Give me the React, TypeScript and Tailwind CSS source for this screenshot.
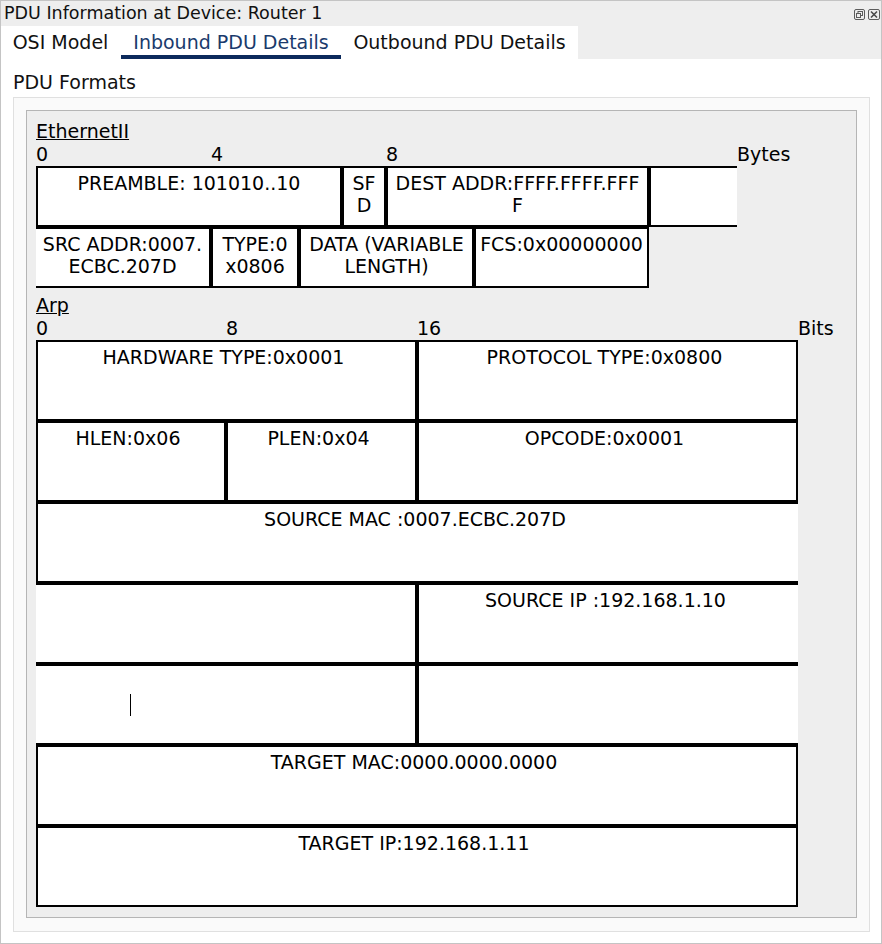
import React from "react";

const base =
  "bg-white border-black text-center pt-[4px] leading-[22px] whitespace-nowrap text-[19px] shrink-0";
const arp = base + " pr-[6px]";

function RestoreIcon() {
  return (
    <svg width="11" height="11" viewBox="0 0 11 11" fill="none">
      <rect x="0.5" y="0.5" width="10" height="10" rx="1.5" stroke="#5c5c5c" />
      <rect x="4" y="2.5" width="4.5" height="4" stroke="#5c5c5c" />
      <rect x="2.5" y="4.5" width="4" height="4" fill="#eeeeee" stroke="#5c5c5c" />
    </svg>
  );
}

function CloseIcon() {
  return (
    <svg width="12" height="11" viewBox="0 0 12 11" fill="none">
      <rect x="0.5" y="0.5" width="11" height="10" rx="1.5" stroke="#5c5c5c" />
      <path d="M3 2.5 L9 8.5 M9 2.5 L3 8.5" stroke="#4a4a4a" strokeWidth="1.6" />
    </svg>
  );
}

export default function App() {
  return (
    <div className="relative w-[882px] h-[944px] border border-[#c4c4c4] bg-white font-['DejaVu_Sans',sans-serif] text-black overflow-hidden">
      {/* Title bar */}
      <div className="h-[25px] bg-[#eeeeee] flex items-center justify-between pl-[3px] pr-[1px]">
        <span className="text-[17.5px] leading-[25px] text-[#111111]">
          PDU Information at Device: Router 1
        </span>
        <div className="flex items-center gap-[3px] self-start mt-[8px]">
          <RestoreIcon />
          <CloseIcon />
        </div>
      </div>

      {/* Tabs */}
      <div className="h-[33px] bg-[#eeeeee] flex">
        <div className="w-[120px] bg-white flex items-center justify-center pl-[1px] pr-[2px] text-[19px] text-[#111111]">
          OSI Model
        </div>
        <div className="w-[220px] bg-white flex items-center justify-center text-[19px] text-[#1a3a6c] shadow-[inset_0_-4px_0_#0c2a5c]">
          Inbound PDU Details
        </div>
        <div className="w-[237px] bg-white flex items-center justify-center text-[19px] text-[#111111]">
          Outbound PDU Details
        </div>
      </div>

      {/* Content */}
      <div className="pt-[12px] px-[12px]">
        <div className="h-[22px] leading-[22px] text-[19px] text-[#111111]">PDU Formats</div>
        <div className="mt-[4px] w-[857px] h-[835px] border border-[#e0e0e0] bg-[#fafafa] p-[12px]">
          <div className="w-[831px] h-[808px] border border-[#b5b5b5] bg-[#eeeeee] pt-[9px] pl-[9px] text-[19px]">
            {/* EthernetII */}
            <div className="leading-[23px] h-[23px] underline">EthernetII</div>
            <div className="flex leading-[23px] h-[23px]">
              <div className="w-[175px]">0</div>
              <div className="w-[175px]">4</div>
              <div className="w-[351px]">8</div>
              <div>Bytes</div>
            </div>
            <div className="flex h-[61px]">
              <div className={base + " w-[306px] border-2"}>PREAMBLE: 101010..10</div>
              <div className={base + " w-[44px] border-2"}>
                SF
                <br />D
              </div>
              <div className={base + " w-[263px] border-2"}>
                DEST ADDR:FFFF.FFFF.FFF
                <br />F
              </div>
              <div className={base + " w-[88px] border-2 border-r-0"}></div>
            </div>
            <div className="flex h-[61px]">
              <div className={base + " w-[175px] border-2 border-l-0"}>
                SRC ADDR:0007.
                <br />
                ECBC.207D
              </div>
              <div className={base + " w-[88px] border-2"}>
                TYPE:0
                <br />
                x0806
              </div>
              <div className={base + " w-[175px] border-2"}>
                DATA (VARIABLE
                <br />
                LENGTH)
              </div>
              <div className={base + " w-[175px] border-2"}>FCS:0x00000000</div>
            </div>

            {/* Arp */}
            <div className="mt-[6px] leading-[23px] h-[23px] underline">Arp</div>
            <div className="flex leading-[23px] h-[23px]">
              <div className="w-[190px]">0</div>
              <div className="w-[191px]">8</div>
              <div className="w-[381px]">16</div>
              <div>Bits</div>
            </div>
            <div className="flex h-[81px]">
              <div className={arp + " w-[381px] border-2"}>HARDWARE TYPE:0x0001</div>
              <div className={arp + " w-[381px] border-2"}>PROTOCOL TYPE:0x0800</div>
            </div>
            <div className="flex h-[81px]">
              <div className={arp + " w-[190px] border-2"}>HLEN:0x06</div>
              <div className={arp + " w-[191px] border-2"}>PLEN:0x04</div>
              <div className={arp + " w-[381px] border-2"}>OPCODE:0x0001</div>
            </div>
            <div className="flex h-[81px]">
              <div className={arp + " w-[762px] border-2 border-r-0"}>SOURCE MAC :0007.ECBC.207D</div>
            </div>
            <div className="flex h-[81px]">
              <div className={arp + " w-[381px] border-2 border-l-0"}></div>
              <div className={arp + " w-[381px] border-2 border-r-0"}>SOURCE IP :192.168.1.10</div>
            </div>
            <div className="flex h-[81px]">
              <div className={arp + " w-[381px] border-2 border-l-0"}></div>
              <div className={arp + " w-[381px] border-2 border-r-0"}></div>
            </div>
            <div className="flex h-[81px]">
              <div className={arp + " w-[762px] border-2"}>TARGET MAC:0000.0000.0000</div>
            </div>
            <div className="flex h-[81px]">
              <div className={arp + " w-[762px] border-2"}>TARGET IP:192.168.1.11</div>
            </div>
          </div>
        </div>
      </div>

      {/* I-beam mouse cursor */}
      <div className="absolute left-[129px] top-[693px] w-[1px] h-[22px] bg-black"></div>
    </div>
  );
}
